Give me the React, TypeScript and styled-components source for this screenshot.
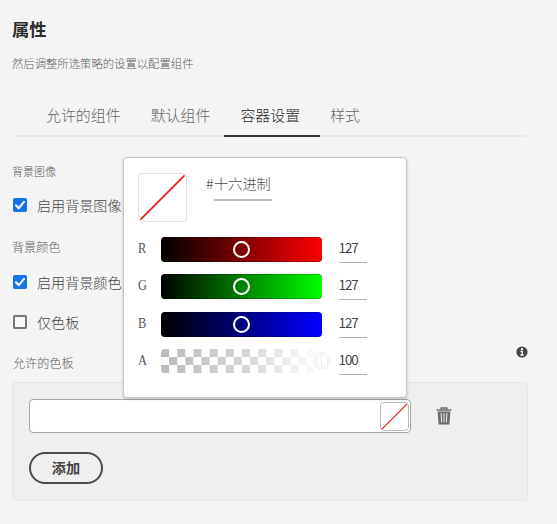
import React from "react";
import styled, { createGlobalStyle } from "styled-components";

const Global = createGlobalStyle`
  * { box-sizing: border-box; }
  body {
    margin: 0;
    background: #f4f4f4;
    font-family: "Noto Sans CJK SC", sans-serif;
    font-weight: 300;
    color: #444;
  }
`;

const Page = styled.main`
  position: relative;
  width: 557px;
  height: 524px;
  padding: 17px 29px 0 12px;
  overflow: hidden;
`;

const Title = styled.h1`
  margin: 0;
  height: 24px;
  font-size: 17.3px;
  line-height: 24px;
  font-weight: 700;
  color: #2c2c2c;
`;

const Subtitle = styled.p`
  margin: 13px 0 0;
  height: 18px;
  font-size: 11.35px;
  line-height: 18px;
  color: #5c5c5c;
`;

const Tabs = styled.nav`
  display: flex;
  width: 512px;
  height: 39px;
  margin: 26px 0 0 1px;
  padding-left: 18px;
  box-shadow: inset 0 -2px #e9e9e9;
`;

const Tab = styled.div<{ $active?: boolean }>`
  height: 39px;
  padding: 0 15px;
  ${(p) => p.$active && "padding: 0 20px 0 16px; margin: 0 -5px 0 -1px;"}
  border-bottom: 2px solid ${(p) => (p.$active ? "#323232" : "transparent")};
  font-size: 14.95px;
  line-height: 33px;
  color: ${(p) => (p.$active ? "#2c2c2c" : "#666")};
`;

const Caption = styled.div<{ $top: number; $size?: number }>`
  height: 18px;
  margin-top: ${(p) => p.$top}px;
  font-size: ${(p) => p.$size ?? 12.1}px;
  line-height: 18px;
  color: #5c5c5c;
`;

const Option = styled.div<{ $top: number }>`
  display: flex;
  align-items: center;
  gap: 10px;
  height: 20px;
  margin: ${(p) => p.$top}px 0 0 1px;
  font-size: 14.1px;
  line-height: 20px;
`;

const OptionText = styled.span`
  padding-bottom: 1px;
`;

const Box = styled.span<{ $on?: boolean }>`
  display: flex;
  width: 14px;
  height: 14px;
  border: ${(p) => (p.$on ? "0" : "2px solid #747474")};
  border-radius: 2px;
  background: ${(p) => (p.$on ? "#1473e6" : "#fafafa")};
`;

const PaletteHeader = styled.div`
  display: flex;
  justify-content: space-between;
  height: 36px;
  margin-top: 14px;
  padding-left: 1px;
`;

const InfoIcon = styled.svg`
  width: 12px;
  height: 12px;
`;

const Panel = styled.section`
  width: 516px;
  height: 119px;
  padding: 16px;
  border: 1px solid #e6e6e6;
  border-radius: 4px;
  background: #efefef;
`;

const PanelRow = styled.div`
  display: flex;
  align-items: center;
  gap: 24px;
`;

const Field = styled.div`
  display: flex;
  justify-content: flex-end;
  align-items: center;
  width: 382px;
  height: 34px;
  padding-right: 1px;
  border: 1px solid #a8a8a8;
  border-radius: 4px;
  background: #fff;
`;

const Swatch = styled.svg<{ $size: number; $edge: string }>`
  width: ${(p) => p.$size}px;
  height: ${(p) => p.$size}px;
  border: 1px solid ${(p) => p.$edge};
  border-radius: 4px;
  background: #fff;
`;

const AddButton = styled.button`
  display: block;
  width: 74px;
  height: 32px;
  margin-top: 19px;
  padding: 0 0 2px;
  border: 2px solid #4b4b4b;
  border-radius: 16px;
  background: transparent;
  font: 700 14.2px/26px "Noto Sans CJK SC", sans-serif;
  color: #444;
`;

const Popover = styled.div`
  position: absolute;
  left: 123px;
  top: 157px;
  width: 284px;
  height: 241px;
  padding: 15px 14px;
  border: 1px solid #c9c9c9;
  border-radius: 4px;
  background: #fff;
  box-shadow: 0 1px 3px rgba(0, 0, 0, 0.22);
`;

const PopoverTop = styled.div`
  display: flex;
  gap: 20px;
  height: 64px;
`;

const Hex = styled.div`
  display: flex;
  height: 28px;
  font-size: 14.2px;
  line-height: 20px;
  color: #4b4b4b;
`;

const HexMark = styled.span`
  width: 7px;
  margin-left: -1px;
  margin-right: 1px;
`;

const HexValue = styled.span`
  width: 58px;
  height: 28px;
  border-bottom: 2px solid #bebebe;
`;

const Channel = styled.div`
  display: flex;
  height: 37.4px;
`;

const Letter = styled.span`
  width: 23px;
  height: 22px;
  font: 400 15.5px/22px "Liberation Serif", serif;
  color: #555;
  transform: scaleX(0.8);
  transform-origin: left;
`;

const Track = styled.div<{ $color: string }>`
  display: flex;
  align-items: center;
  justify-content: center;
  width: 161px;
  height: 25px;
  border-radius: 4px;
  background: linear-gradient(to right, #000, ${(p) => p.$color});
  box-shadow: inset 0 -1px rgba(0, 0, 0, 0.25), inset 0 1px rgba(0, 0, 0, 0.2);
`;

const Knob = styled.span`
  width: 17px;
  height: 17px;
  border: 2px solid #fff;
  border-radius: 50%;
`;

const AlphaTrack = styled.svg`
  width: 170px;
  height: 24px;
  margin-right: -9px;
`;

const Amount = styled.span`
  width: 28px;
  height: 26px;
  margin-left: 17px;
  border-bottom: 1px solid #b0b0b0;
  font-size: 13.4px;
  font-weight: 400;
  line-height: 21px;
  letter-spacing: -1px;
  text-indent: -0.5px;
`;

function Check({ on }: { on?: boolean }) {
  return (
    <Box $on={on}>
      {on && (
        <svg width="14" height="14" viewBox="0 0 14 14" fill="none">
          <path d="M3 7.2 5.8 10.2 11 3.8" stroke="#fff" strokeWidth="2" strokeLinecap="round" strokeLinejoin="round" />
        </svg>
      )}
    </Box>
  );
}

function EmptyColor({ size, edge, stroke }: { size: number; edge: string; stroke: number }) {
  return (
    <Swatch $size={size} $edge={edge} viewBox="0 0 48 48">
      <path d="M1.5 46.5 46.5 1.5" stroke="#ee141b" strokeWidth={stroke} />
    </Swatch>
  );
}

function Trash() {
  return (
    <svg width="18" height="20" viewBox="0 0 18 20">
      <path d="M6.2 3.5V2H11.8V3.5M1.6 4H16.4" fill="none" stroke="#6c6c6c" strokeWidth="1.5" />
      <path d="M2.6 5.5H15.4L14.4 18.5H3.6Z" fill="#6c6c6c" />
      <path d="M6.1 7 6.6 16.5M9 7V16.5M11.9 7 11.4 16.5" stroke="#f0f0f0" strokeWidth="1" />
    </svg>
  );
}

function Alpha() {
  const cells = [];
  for (let col = 0; col < 20; col++) {
    for (let row = 0; row < 3; row++) {
      if ((col + row) % 2 === 0) {
        cells.push(<rect key={`${col}-${row}`} x={col * 8.1} y={row * 8} width="8.1" height="8" />);
      }
    }
  }
  return (
    <AlphaTrack viewBox="0 0 170 24">
      <defs>
        <linearGradient id="fade" gradientUnits="userSpaceOnUse" x1="0" y1="0" x2="161" y2="0">
          <stop stopColor="#bcbcbc" />
          <stop offset="0.5" stopColor="#d3d3d3" />
          <stop offset="1" stopColor="#ffffff" />
        </linearGradient>
        <clipPath id="round"><rect width="161" height="24" rx="4" /></clipPath>
      </defs>
      <g fill="url(#fade)" clipPath="url(#round)">{cells}</g>
      <g fill="none" stroke="#ececec" strokeWidth="1">
        <circle cx="161" cy="12" r="8.3" />
        <circle cx="161" cy="12" r="6" />
        <path d="M160.5 6V18" />
      </g>
    </AlphaTrack>
  );
}

const channels = [
  { name: "R", color: "#f00" },
  { name: "G", color: "#0f0" },
  { name: "B", color: "#00f" },
];

export default function App() {
  return (
    <>
      <Global />
      <Page>
        <Title>属性</Title>
        <Subtitle>然后调整所选策略的设置以配置组件</Subtitle>
        <Tabs>
          <Tab>允许的组件</Tab>
          <Tab>默认组件</Tab>
          <Tab $active>容器设置</Tab>
          <Tab>样式</Tab>
        </Tabs>
        <Caption $top={25} $size={11}>背景图像</Caption>
        <Option $top={15}><Check on /><OptionText>启用背景图像</OptionText></Option>
        <Caption $top={23}>背景颜色</Caption>
        <Option $top={16}><Check on /><OptionText>启用背景颜色</OptionText></Option>
        <Option $top={20}><Check /><OptionText>仅色板</OptionText></Option>
        <PaletteHeader>
          <Caption $top={8}>允许的色板</Caption>
          <InfoIcon viewBox="0 0 12 12">
            <circle cx="6" cy="6" r="5.6" fill="#444" />
            <circle cx="6" cy="3.2" r="1.1" fill="#fff" />
            <path d="M4.5 5.5H6.3V9M4.4 9H7.7" fill="none" stroke="#fff" strokeWidth="1.3" />
          </InfoIcon>
        </PaletteHeader>
        <Panel>
          <PanelRow>
            <Field><EmptyColor size={29} edge="#bcbcbc" stroke={2.2} /></Field>
            <Trash />
          </PanelRow>
          <AddButton>添加</AddButton>
        </Panel>
        <Popover>
          <PopoverTop>
            <EmptyColor size={49} edge="#e2e2e2" stroke={1.8} />
            <Hex><HexMark>#</HexMark><HexValue>十六进制</HexValue></Hex>
          </PopoverTop>
          {channels.map((c) => (
            <Channel key={c.name}>
              <Letter>{c.name}</Letter>
              <Track $color={c.color}><Knob /></Track>
              <Amount>127</Amount>
            </Channel>
          ))}
          <Channel>
            <Letter>A</Letter>
            <Alpha />
            <Amount>100</Amount>
          </Channel>
        </Popover>
      </Page>
    </>
  );
}
